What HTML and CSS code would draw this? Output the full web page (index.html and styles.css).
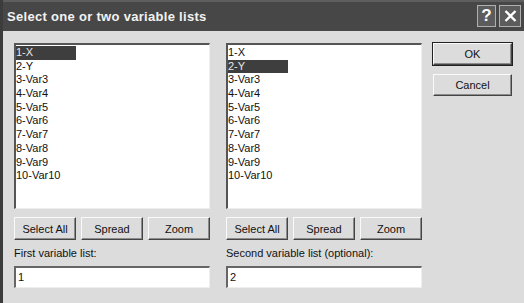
FILE: index.html
```html
<!DOCTYPE html>
<html lang="en">
<head>
    <meta charset="UTF-8">
    <title>Select one or two variable lists</title>
    <link rel="stylesheet" href="styles.css">
</head>
<body>
    <div class="window">
        <div class="titlebar">
            <span class="title">Select one or two variable lists</span>
            <div class="caption-buttons">
                <span class="cap-btn">?</span>
                <span class="cap-btn">
                    <svg width="13" height="12" viewBox="0 0 13 12">
                        <path d="M1.5 1 L11.5 11 M11.5 1 L1.5 11" stroke="#fff" stroke-width="2.4"/>
                    </svg>
                </span>
            </div>
        </div>

        <div class="client">
            <!-- first list -->
            <div class="pane">
                <ul class="listbox">
                    <li class="selected">1-X</li>
                    <li>2-Y</li>
                    <li>3-Var3</li>
                    <li>4-Var4</li>
                    <li>5-Var5</li>
                    <li>6-Var6</li>
                    <li>7-Var7</li>
                    <li>8-Var8</li>
                    <li>9-Var9</li>
                    <li>10-Var10</li>
                </ul>
                <div class="btn-row">
                    <button class="btn">Select All</button>
                    <button class="btn">Spread</button>
                    <button class="btn">Zoom</button>
                </div>
                <label class="field-label">First variable list:</label>
                <div class="textbox">1</div>
            </div>

            <!-- second list -->
            <div class="pane">
                <ul class="listbox">
                    <li>1-X</li>
                    <li class="selected">2-Y</li>
                    <li>3-Var3</li>
                    <li>4-Var4</li>
                    <li>5-Var5</li>
                    <li>6-Var6</li>
                    <li>7-Var7</li>
                    <li>8-Var8</li>
                    <li>9-Var9</li>
                    <li>10-Var10</li>
                </ul>
                <div class="btn-row">
                    <button class="btn">Select All</button>
                    <button class="btn">Spread</button>
                    <button class="btn">Zoom</button>
                </div>
                <label class="field-label">Second variable list (optional):</label>
                <div class="textbox">2</div>
            </div>

            <div class="side-buttons">
                <button class="btn btn-default">OK</button>
                <button class="btn">Cancel</button>
            </div>
        </div>
    </div>
</body>
</html>
```

FILE: styles.css
```css
body {
    margin: 0;
    padding: 0;
    background-color: #dcdcdc;
    font-family: "Liberation Sans", Arial, sans-serif;
}
.window {
    width: 524px;
    height: 303px;
    box-sizing: border-box;
    border-left: 3px solid #3c3c3c;
    background-color: #dcdcdc;
    overflow: hidden;
}
.titlebar {
    height: 31px;
    box-sizing: border-box;
    background-color: #474747;
    border-top: 2px solid #5e5e5e;
    display: flex;
    align-items: center;
    justify-content: space-between;
    padding: 0 3px 1px 4px;
}
.title {
    color: #f2f2f2;
    font-weight: bold;
    font-size: 13px;
    letter-spacing: 0.3px;
}
.caption-buttons {
    display: flex;
    gap: 3px;
}
.cap-btn {
    width: 19px;
    height: 22px;
    box-sizing: border-box;
    border: 1px solid #b0b0b0;
    background-color: #5c5c5c;
    color: #fff;
    font-weight: bold;
    font-size: 17px;
    display: flex;
    align-items: center;
    justify-content: center;
}
.cap-btn:last-child {
    width: 22px;
}
.client {
    display: flex;
    padding: 12px 0 0 11px;
}
.pane {
    width: 196px;
    margin-right: 16px;
    display: flex;
    flex-direction: column;
}
.listbox {
    list-style: none;
    margin: 0;
    height: 166px;
    box-sizing: border-box;
    padding: 1px 0 0 0;
    background: white;
    border-top: 2px solid #555;
    border-left: 2px solid #555;
    border-right: 1px solid #eee;
    border-bottom: 1px solid #eee;
    font-size: 11px;
}
.listbox li {
    width: 60px;
    height: 13.7px;
    line-height: 13.7px;
    color: #111;
}
.listbox li.selected {
    background-color: #3e3e3e;
    color: #e6e6e6;
}
.btn-row {
    display: flex;
    justify-content: space-between;
    margin-top: 8px;
}
.btn {
    width: 62px;
    height: 23px;
    box-sizing: border-box;
    padding: 0;
    font-family: "Liberation Sans", Arial, sans-serif;
    font-size: 11px;
    color: #111;
    background-color: #dcdcdc;
    border: 1px solid;
    border-color: #fafafa #444 #444 #fafafa;
    box-shadow: inset -1px -1px 0 #8c8c8c;
}
.field-label {
    font-size: 11px;
    color: #111;
    margin-top: 6px;
    height: 14px;
    line-height: 14px;
}
.textbox {
    margin-top: 6px;
    height: 22px;
    box-sizing: border-box;
    background: white;
    border-top: 2px solid #666;
    border-left: 2px solid #666;
    border-right: 1px solid #eee;
    border-bottom: 1px solid #eee;
    font-size: 11px;
    line-height: 18px;
    padding-left: 2px;
    color: #111;
}
.side-buttons {
    margin-left: -5px;
    display: flex;
    flex-direction: column;
    gap: 9px;
}
.side-buttons .btn {
    width: 79px;
    height: 22px;
}
.btn-default {
    outline: 1px solid #222;
}
```
